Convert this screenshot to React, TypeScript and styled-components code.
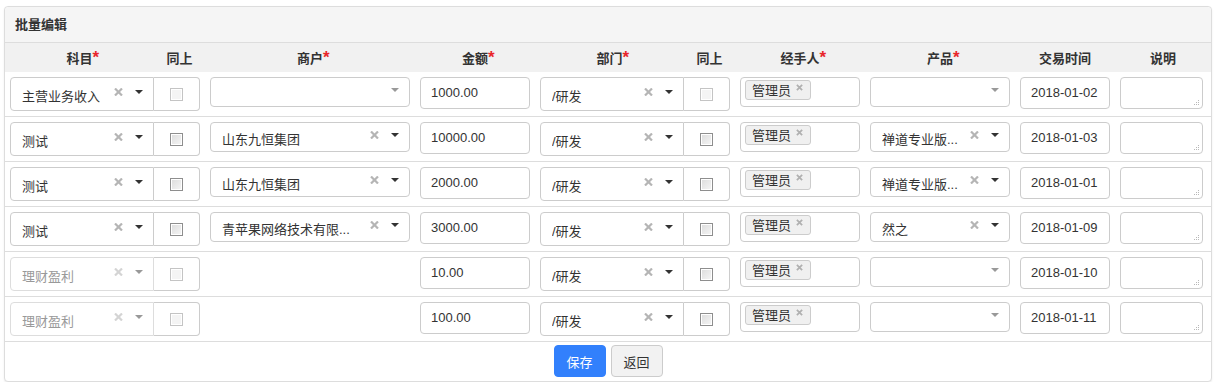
import styled, { createGlobalStyle } from 'styled-components';

const GlobalStyle = createGlobalStyle`
  body {
    margin: 0;
    background: #fff;
    color: #333;
    font-family: "Liberation Sans", "Noto Sans CJK SC", sans-serif;
    font-size: 13px;
  }
`;

const COLS = '149px 51px 210px 120px 149px 51px 130px 150px 100px 1fr';

const Panel = styled.div`
  margin: 6px 0 0 4px;
  width: 1206px;
  border: 1px solid #ddd;
  border-radius: 4px;
  background: #fff;
  box-shadow: 0 1px 2px rgba(0, 0, 0, 0.08);
`;

const Heading = styled.div`
  height: 35px;
  line-height: 35px;
  padding: 0 10px;
  background: #f5f5f5;
  border-bottom: 1px solid #ddd;
  border-radius: 4px 4px 0 0;
  font-weight: bold;
`;

const HeadRow = styled.div`
  display: grid;
  grid-template-columns: ${COLS};
  height: 29px;
  background: #f1f1f1;
`;

const Th = styled.div`
  display: flex;
  align-items: center;
  justify-content: center;
  font-weight: bold;
`;

const Label = styled.span<{ $required?: boolean }>`
  position: relative;
  &::after {
    content: ${(p) => (p.$required ? "'*'" : "''")};
    position: absolute;
    left: 100%;
    top: 1px;
    color: #e8262b;
    font-size: 17px;
    font-weight: bold;
    line-height: 17px;
  }
`;

const Row = styled.div`
  display: grid;
  grid-template-columns: ${COLS};
  height: 44px;
  border-bottom: 1px solid #ddd;
`;

const Cell = styled.div<{ $pad?: string }>`
  padding: ${(p) => p.$pad ?? '5px 5px 0'};
`;

const Select = styled.div<{ $group?: boolean; $disabled?: boolean }>`
  display: flex;
  align-items: center;
  box-sizing: border-box;
  height: ${(p) => (p.$group ? '34px' : '30px')};
  padding: 0 10px 0 11px;
  border: 1px solid ${(p) => (p.$disabled ? '#ddd' : '#ccc')};
  border-radius: ${(p) => (p.$group ? '4px 0 0 4px' : '4px')};
  background: #fff;
  color: ${(p) => (p.$disabled ? '#999' : '#333')};
`;

const SelectText = styled.span`
  flex: 1;
  padding-top: 3px;
  white-space: nowrap;
  overflow: hidden;
`;

const Clear = styled.svg`
  margin: -5px 12px 0 0;
  flex: none;
`;

const Caret = styled.span<{ $muted?: boolean }>`
  margin-top: -4px;
  border-top: 4px solid ${(p) => (p.$muted ? '#999' : '#333')};
  border-left: 4px solid transparent;
  border-right: 4px solid transparent;
`;

const Addon = styled.div`
  display: flex;
  align-items: center;
  justify-content: center;
  box-sizing: border-box;
  height: 34px;
  border: 1px solid #ccc;
  border-left: none;
  border-radius: 0 4px 4px 0;
  background: #fff;
`;

const Check = styled.span<{ $disabled?: boolean }>`
  box-sizing: border-box;
  width: 13px;
  height: 13px;
  border: 1px solid ${(p) => (p.$disabled ? '#c4c4c4' : '#8e8e8e')};
  box-shadow: inset 0 0 0 1px #fff;
  background: ${(p) =>
    p.$disabled ? '#f4f4f4' : 'linear-gradient(135deg, #dcdcdc, #f6f6f6)'};
`;

const Input = styled.div`
  box-sizing: border-box;
  height: 32px;
  line-height: 30px;
  padding: 0 10px;
  border: 1px solid #ccc;
  border-radius: 4px;
  background: #fff;
  white-space: nowrap;
  overflow: hidden;
`;

const TagBox = styled.div`
  box-sizing: border-box;
  height: 30px;
  padding: 2px 4px;
  border: 1px solid #ccc;
  border-radius: 4px;
`;

const Tag = styled.span`
  position: relative;
  display: inline-block;
  box-sizing: border-box;
  width: 66px;
  height: 20px;
  line-height: 20px;
  padding-left: 6px;
  border: 1px solid #ccc;
  border-radius: 3px;
  background: #f0f0f0;
  svg {
    position: absolute;
    right: 7px;
    top: 3px;
  }
`;

const Note = styled.div`
  position: relative;
  box-sizing: border-box;
  width: 83px;
  height: 32px;
  border: 1px solid #ccc;
  border-radius: 4px;
  background: #fff;
  svg {
    position: absolute;
    right: 2px;
    bottom: 2px;
  }
`;

const Actions = styled.div`
  display: flex;
  justify-content: center;
  gap: 5px;
  padding: 3px 0 4px;
  height: 32px;
`;

const Button = styled.button<{ $primary?: boolean }>`
  width: 52px;
  height: 32px;
  padding: 0;
  border: 1px solid ${(p) => (p.$primary ? '#3280fc' : '#ccc')};
  border-radius: 4px;
  background: ${(p) => (p.$primary ? '#3280fc' : '#f2f2f2')};
  color: ${(p) => (p.$primary ? '#fff' : '#333')};
  font: inherit;
`;

function Cross({ size = 8, color = '#aaa' }: { size?: number; color?: string }) {
  return (
    <svg width={size} height={size} viewBox="0 0 8 8">
      <path d="M1 1L7 7M7 1L1 7" stroke={color} strokeWidth="2" />
    </svg>
  );
}

function Grip() {
  return (
    <svg width="7" height="7" viewBox="0 0 7 7" fill="#b8b8b8">
      <rect x="5" y="1" width="1" height="1" />
      <rect x="3" y="3" width="1" height="1" />
      <rect x="5" y="3" width="1" height="1" />
      <rect x="1" y="5" width="1" height="1" />
      <rect x="3" y="5" width="1" height="1" />
      <rect x="5" y="5" width="1" height="1" />
    </svg>
  );
}

function Chosen({
  value,
  group,
  disabled,
}: {
  value: string;
  group?: boolean;
  disabled?: boolean;
}) {
  return (
    <Select $group={group} $disabled={disabled}>
      <SelectText>{value}</SelectText>
      {value && (
        <Clear width="9" height="8" viewBox="0 0 9 8">
          <path d="M1 0.5L8 7.5M8 0.5L1 7.5" stroke={disabled ? '#d4d4d4' : '#b5b5b5'} strokeWidth="2.2" />
        </Clear>
      )}
      <Caret $muted={!value || disabled} />
    </Select>
  );
}

const headers: [string, boolean][] = [
  ['科目', true],
  ['同上', false],
  ['商户', true],
  ['金额', true],
  ['部门', true],
  ['同上', false],
  ['经手人', true],
  ['产品', true],
  ['交易时间', false],
  ['说明', false],
];

interface Line {
  subject: string;
  locked?: boolean;
  first?: boolean;
  trader: string | null;
  amount: string;
  product: string;
  date: string;
}

const lines: Line[] = [
  { subject: '主营业务收入', first: true, trader: '', amount: '1000.00', product: '', date: '2018-01-02' },
  { subject: '测试', trader: '山东九恒集团', amount: '10000.00', product: '禅道专业版...', date: '2018-01-03' },
  { subject: '测试', trader: '山东九恒集团', amount: '2000.00', product: '禅道专业版...', date: '2018-01-01' },
  { subject: '测试', trader: '青苹果网络技术有限...', amount: '3000.00', product: '然之', date: '2018-01-09' },
  { subject: '理财盈利', locked: true, trader: null, amount: '10.00', product: '', date: '2018-01-10' },
  { subject: '理财盈利', locked: true, trader: null, amount: '100.00', product: '', date: '2018-01-11' },
];

export default function App() {
  return (
    <>
      <GlobalStyle />
      <Panel>
        <Heading>批量编辑</Heading>
        <HeadRow>
          {headers.map(([name, req], i) => (
            <Th key={i}>
              <Label $required={req}>{name}</Label>
            </Th>
          ))}
        </HeadRow>
        {lines.map((l, i) => (
          <Row key={i}>
            <Cell $pad="5px 0 0 5px">
              <Chosen value={l.subject} group disabled={l.locked} />
            </Cell>
            <Cell $pad="5px 5px 0 0">
              <Addon>
                <Check $disabled={l.first || l.locked} />
              </Addon>
            </Cell>
            <Cell>{l.trader !== null && <Chosen value={l.trader} />}</Cell>
            <Cell>
              <Input>{l.amount}</Input>
            </Cell>
            <Cell $pad="5px 0 0 5px">
              <Chosen value="/研发" group />
            </Cell>
            <Cell $pad="5px 5px 0 0">
              <Addon>
                <Check $disabled={l.first} />
              </Addon>
            </Cell>
            <Cell>
              <TagBox>
                <Tag>
                  管理员
                  <Cross size={7} color="#b0b0b0" />
                </Tag>
              </TagBox>
            </Cell>
            <Cell>
              <Chosen value={l.product} />
            </Cell>
            <Cell>
              <Input>{l.date}</Input>
            </Cell>
            <Cell>
              <Note>
                <Grip />
              </Note>
            </Cell>
          </Row>
        ))}
        <Actions>
          <Button $primary>保存</Button>
          <Button>返回</Button>
        </Actions>
      </Panel>
    </>
  );
}
